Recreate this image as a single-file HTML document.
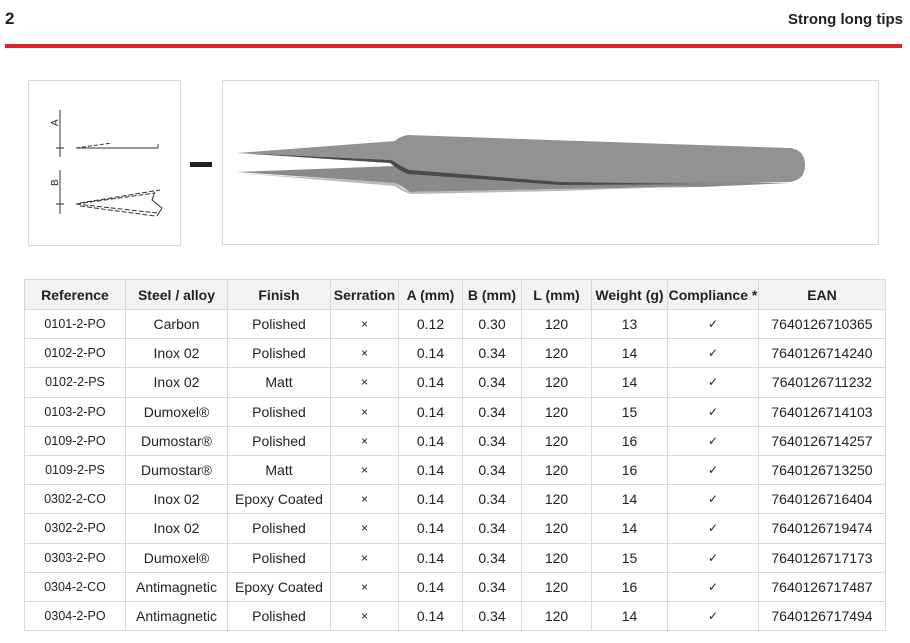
<!DOCTYPE html>
<html><head><style>
body{margin:0;width:910px;height:643px;background:#fff;font-family:"Liberation Sans",sans-serif;position:relative;overflow:hidden;color:#222}
.n{position:absolute;left:5px;top:9px;font-weight:bold;font-size:17px}
.t{position:absolute;right:7px;top:11px;font-weight:bold;font-size:15px;color:#222}
.red{position:absolute;left:5px;top:44px;width:897px;height:4px;background:#e3232a}
.box{position:absolute;border:1px solid #d8d8d8;border-radius:2px;background:#fff}
table{position:absolute;left:24px;top:279px;border-collapse:collapse;table-layout:fixed}
td,th{border:1px solid #dadada;text-align:center;font-size:14px;padding:0;height:28.2px;color:#222}
th{background:#f3f3f3;font-weight:bold;height:29px}
td:first-child{font-size:12.5px}
.x{font-size:12px}
.c{font-size:12px}
</style></head><body>
<div class="n">2</div><div class="t">Strong long tips</div><div class="red"></div>
<div class="box" style="left:28px;top:80px;width:151px;height:164px"></div>
<svg style="position:absolute;left:0;top:0" width="910" height="260">
<g stroke="#333" fill="none" stroke-width="1">
<line x1="60" y1="110" x2="60" y2="157"/><line x1="56" y1="148" x2="64" y2="148"/>
<line x1="76" y1="148" x2="158" y2="148"/><line x1="158" y1="148" x2="158" y2="144"/>
<line x1="76" y1="148" x2="112" y2="143" stroke-dasharray="4,2"/>
<line x1="60" y1="170" x2="60" y2="214"/><line x1="56" y1="204" x2="64" y2="204"/>
<line x1="76" y1="204" x2="155" y2="193" stroke-dasharray="5,2"/>
<line x1="80" y1="203" x2="160" y2="190" stroke-dasharray="5,2"/>
<line x1="76" y1="204" x2="157" y2="213" stroke-dasharray="5,2"/>
<line x1="80" y1="206" x2="155" y2="216" stroke-dasharray="5,2"/>
<polyline points="155,192 152,200 162,208 157,216"/>
</g>
<text x="58" y="126" font-size="10" font-family="Liberation Sans" transform="rotate(-90 58 126)" fill="#222">A</text>
<text x="58" y="186" font-size="10" font-family="Liberation Sans" transform="rotate(-90 58 186)" fill="#222">B</text>
<rect x="190" y="162" width="22" height="5" fill="#222"/>
<rect x="222.5" y="80.5" width="656" height="164" fill="none" stroke="#d8d8d8"/>
<!-- lower arm -->
<path d="M237,172 L395,166 L405,170 L560,176 L700,181 L790,183 L700,187 L560,189 L410,192 Q402,186 395,183 Z" fill="#8a8a8a"/>
<!-- upper arm -->
<path d="M237,153 L395,141 Q400,136 408,135 L550,140 L790,148 Q805,150 805,165 Q805,180 790,182 L560,182 L410,170 Q400,166 392,160 Z" fill="#929292"/>
<path d="M237,153 L392,160 Q400,166 410,170 L560,182 L700,184 L560,185 L408,174 Q398,170 390,163 Z" fill="#4a4a4a"/>
<path d="M237,173 L395,183 Q402,188 410,192 L560,189 L700,186 L560,191 L410,194 Q400,190 395,186 Z" fill="#b8b8b8"/>
</svg>
<table>
<colgroup><col style="width:101px"><col style="width:102px"><col style="width:103px"><col style="width:68px"><col style="width:64px"><col style="width:59px"><col style="width:70px"><col style="width:76px"><col style="width:91px"><col style="width:127px"></colgroup>
<tr><th>Reference</th><th>Steel / alloy</th><th>Finish</th><th>Serration</th><th>A (mm)</th><th>B (mm)</th><th>L (mm)</th><th>Weight (g)</th><th>Compliance *</th><th>EAN</th></tr>
<tr><td>0101-2-PO</td><td>Carbon</td><td>Polished</td><td class="x">×</td><td>0.12</td><td>0.30</td><td>120</td><td>13</td><td class="c">✓</td><td>7640126710365</td></tr>
<tr><td>0102-2-PO</td><td>Inox 02</td><td>Polished</td><td class="x">×</td><td>0.14</td><td>0.34</td><td>120</td><td>14</td><td class="c">✓</td><td>7640126714240</td></tr>
<tr><td>0102-2-PS</td><td>Inox 02</td><td>Matt</td><td class="x">×</td><td>0.14</td><td>0.34</td><td>120</td><td>14</td><td class="c">✓</td><td>7640126711232</td></tr>
<tr><td>0103-2-PO</td><td>Dumoxel®</td><td>Polished</td><td class="x">×</td><td>0.14</td><td>0.34</td><td>120</td><td>15</td><td class="c">✓</td><td>7640126714103</td></tr>
<tr><td>0109-2-PO</td><td>Dumostar®</td><td>Polished</td><td class="x">×</td><td>0.14</td><td>0.34</td><td>120</td><td>16</td><td class="c">✓</td><td>7640126714257</td></tr>
<tr><td>0109-2-PS</td><td>Dumostar®</td><td>Matt</td><td class="x">×</td><td>0.14</td><td>0.34</td><td>120</td><td>16</td><td class="c">✓</td><td>7640126713250</td></tr>
<tr><td>0302-2-CO</td><td>Inox 02</td><td>Epoxy Coated</td><td class="x">×</td><td>0.14</td><td>0.34</td><td>120</td><td>14</td><td class="c">✓</td><td>7640126716404</td></tr>
<tr><td>0302-2-PO</td><td>Inox 02</td><td>Polished</td><td class="x">×</td><td>0.14</td><td>0.34</td><td>120</td><td>14</td><td class="c">✓</td><td>7640126719474</td></tr>
<tr><td>0303-2-PO</td><td>Dumoxel®</td><td>Polished</td><td class="x">×</td><td>0.14</td><td>0.34</td><td>120</td><td>15</td><td class="c">✓</td><td>7640126717173</td></tr>
<tr><td>0304-2-CO</td><td>Antimagnetic</td><td>Epoxy Coated</td><td class="x">×</td><td>0.14</td><td>0.34</td><td>120</td><td>16</td><td class="c">✓</td><td>7640126717487</td></tr>
<tr><td>0304-2-PO</td><td>Antimagnetic</td><td>Polished</td><td class="x">×</td><td>0.14</td><td>0.34</td><td>120</td><td>14</td><td class="c">✓</td><td>7640126717494</td></tr>
</table>
</body></html>
